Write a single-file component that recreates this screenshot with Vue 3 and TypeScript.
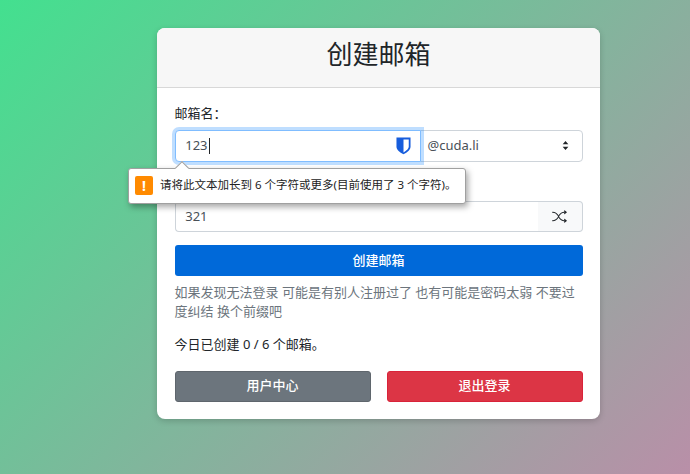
<script setup lang="ts">
const title: string = '创建邮箱'
</script>

<template>
  <main class="page">
    <section class="card">
      <header class="card-header">
        <h2>{{ title }}</h2>
      </header>
      <div class="card-body">
        <label class="label">邮箱名：</label>
        <div class="group">
          <div class="input name">
            <span>123</span><i class="caret"></i>
            <svg class="shield" viewBox="0 0 16 18" width="15" height="18">
              <path fill="#175ddc" d="M.5 0h15v9.500c0 1.700-.8 3.200-2 4.500-1.500 1.600-3.500 2.900-5.500 3.800-2-.9-4-2.200-5.500-3.800-1.200-1.300-2-2.800-2-4.500z" />
              <path fill="#fff" d="M8 2h5.600v7.500c0 1.200-.6 2.300-1.500 3.300-1.100 1.200-2.600 2.200-4.100 3z" />
            </svg>
            <div class="bubble">
              <span class="arrow"></span>
              <span class="warn">!</span>
              <span class="bubble-text">请将此文本加长到 6 个字符或更多(目前使用了 3 个字符)。</span>
            </div>
          </div>
          <div class="input domain">
            <span>@cuda.li</span>
            <svg viewBox="0 0 16 16" width="13" height="13">
              <path fill="#212529" d="M8 2.500 11.500 6.500h-7zM8 13.500 4.500 9.500h7z" />
            </svg>
          </div>
        </div>

        <div class="label-spacer"></div>
        <div class="group">
          <div class="input pass">321</div>
          <button class="shuffle" type="button" aria-label="随机">
            <svg viewBox="0 0 16 16" width="15" height="15" fill="#212529">
              <path fill-rule="evenodd" d="M0 3.500A.5.5 0 0 1 .5 3H1c2.202 0 3.827 1.240 4.874 2.418.49.552.865 1.102 1.126 1.532.26-.43.636-.98 1.126-1.532C9.173 4.240 10.798 3 13 3v1c-1.798 0-3.173 1.010-4.126 2.082A9.624 9.624 0 0 0 7.556 8a9.624 9.624 0 0 0 1.317 1.918C9.828 10.990 11.204 12 13 12v1c-2.202 0-3.827-1.240-4.874-2.418A10.595 10.595 0 0 1 7 9.050c-.26.43-.636.98-1.126 1.532C4.827 11.760 3.202 13 1 13H.5a.5.5 0 0 1 0-1H1c1.798 0 3.173-1.010 4.126-2.082A9.624 9.624 0 0 0 6.444 8a9.624 9.624 0 0 0-1.317-1.918C4.172 5.010 2.796 4 1 4H.5a.5.5 0 0 1-.5-.5z" />
              <path d="M13 5.466V1.534a.25.25 0 0 1 .41-.192l2.360 1.966c.12.1.12.284 0 .384l-2.360 1.966a.25.25 0 0 1-.41-.192zm0 9v-3.932a.25.25 0 0 1 .41-.192l2.360 1.966c.12.1.12.284 0 .384l-2.360 1.966a.25.25 0 0 1-.41-.192z" />
            </svg>
          </button>
        </div>

        <button class="btn primary wide" type="button">创建邮箱</button>
        <p class="hint">如果发现无法登录 可能是有别人注册过了 也有可能是密码太弱 不要过度纠结 换个前缀吧</p>
        <p class="count">今日已创建 0 / 6 个邮箱。</p>
        <div class="actions">
          <button class="btn secondary" type="button">用户中心</button>
          <button class="btn danger" type="button">退出登录</button>
        </div>
      </div>
    </section>
  </main>
</template>

<style>
body {
  margin: 0;
}
</style>

<style scoped>
.page {
  box-sizing: border-box;
  width: 690px;
  height: 474px;
  overflow: hidden;
  padding: 28px 0 0 157px;
  background: linear-gradient(135deg, #43e08f 0%, #b98fa8 100%);
  font-family: "Noto Sans", "Noto Sans CJK SC", sans-serif;
  font-size: 13px;
  line-height: 19.5px;
  color: #212529;
}
.card {
  box-sizing: border-box;
  width: 443px;
  background: #fff;
  border-radius: 8px;
  box-shadow: 0 2px 6px rgba(0, 0, 0, 0.18);
}
.card-header {
  box-sizing: border-box;
  height: 60px;
  display: flex;
  align-items: center;
  justify-content: center;
  background: #f7f7f7;
  border-bottom: 1px solid rgba(0, 0, 0, 0.125);
  border-radius: 8px 8px 0 0;
}
h2 {
  margin: 0 0 6.5px;
  font-size: 26px;
  font-weight: 400;
  line-height: 31px;
}
.card-body {
  display: flex;
  flex-direction: column;
  padding: 16.25px 17.5px 17px;
}
.label {
  margin-bottom: 6.5px;
}
.label-spacer {
  height: 19.5px;
  margin: 13px 0 6.5px;
}
.group {
  display: flex;
  height: 31.25px;
}
.input {
  box-sizing: border-box;
  display: flex;
  align-items: center;
  position: relative;
  padding: 0 9.75px;
  background: #fff;
  border: 1px solid #ced4da;
  color: #495057;
}
.name {
  width: 246px;
  border-color: #80bdff;
  border-radius: 4px 0 0 4px;
  box-shadow: 0 0 0 3px rgba(0, 123, 255, 0.25);
  z-index: 1;
}
.caret {
  width: 1px;
  height: 16px;
  margin-left: 1px;
  background: #212529;
}
.shield {
  position: absolute;
  right: 9px;
  top: 5.5px;
}
.bubble {
  position: absolute;
  left: -47.5px;
  top: 36.75px;
  box-sizing: border-box;
  width: 338px;
  height: 35.5px;
  display: flex;
  align-items: center;
  gap: 7px;
  padding: 0 6px;
  background: #fff;
  border: 1px solid #a0a0a0;
  border-radius: 3px;
  box-shadow: 2px 3px 6px rgba(0, 0, 0, 0.35);
  color: #222;
  font-size: 11.5px;
  white-space: nowrap;
}
.bubble-text {
  padding-bottom: 2px;
}
.arrow {
  position: absolute;
  left: 48px;
  top: -6px;
  width: 9px;
  height: 9px;
  background: #fff;
  border-left: 1px solid #a0a0a0;
  border-top: 1px solid #a0a0a0;
  transform: rotate(45deg);
}
.warn {
  flex: none;
  width: 18px;
  height: 19px;
  display: flex;
  align-items: center;
  justify-content: center;
  border-radius: 2px;
  background: #ff8a00;
  color: #fff;
  font-size: 14px;
  font-weight: 700;
}
.domain {
  flex: 1;
  justify-content: space-between;
  margin-left: -1px;
  padding-left: 7px;
  padding-right: 10px;
  border-radius: 0 4px 4px 0;
}
.pass {
  flex: 1;
  padding-top: 2px;
  border-right: 0;
  border-radius: 4px 0 0 4px;
}
.shuffle {
  width: 45px;
  display: flex;
  align-items: center;
  justify-content: center;
  padding: 0;
  background: #f8f9fa;
  border: 1px solid #ced4da;
  border-left: 0;
  border-radius: 0 4px 4px 0;
}
.btn {
  height: 31.25px;
  box-sizing: border-box;
  border: 1px solid transparent;
  border-radius: 3px;
  font: inherit;
  font-weight: 500;
  color: #fff;
}
.wide {
  margin-top: 13px;
}
.primary {
  background: #0069d9;
}
.secondary {
  flex: 1;
  background: #6c757d;
  border-color: #5f666d;
}
.danger {
  flex: 1;
  background: #dc3545;
  border-color: #d9233a;
}
.hint {
  margin: 6.5px 0 13px;
  color: #6c757d;
}
.count {
  margin: 0 0 16.5px;
}
.actions {
  display: flex;
  gap: 16px;
}
</style>
